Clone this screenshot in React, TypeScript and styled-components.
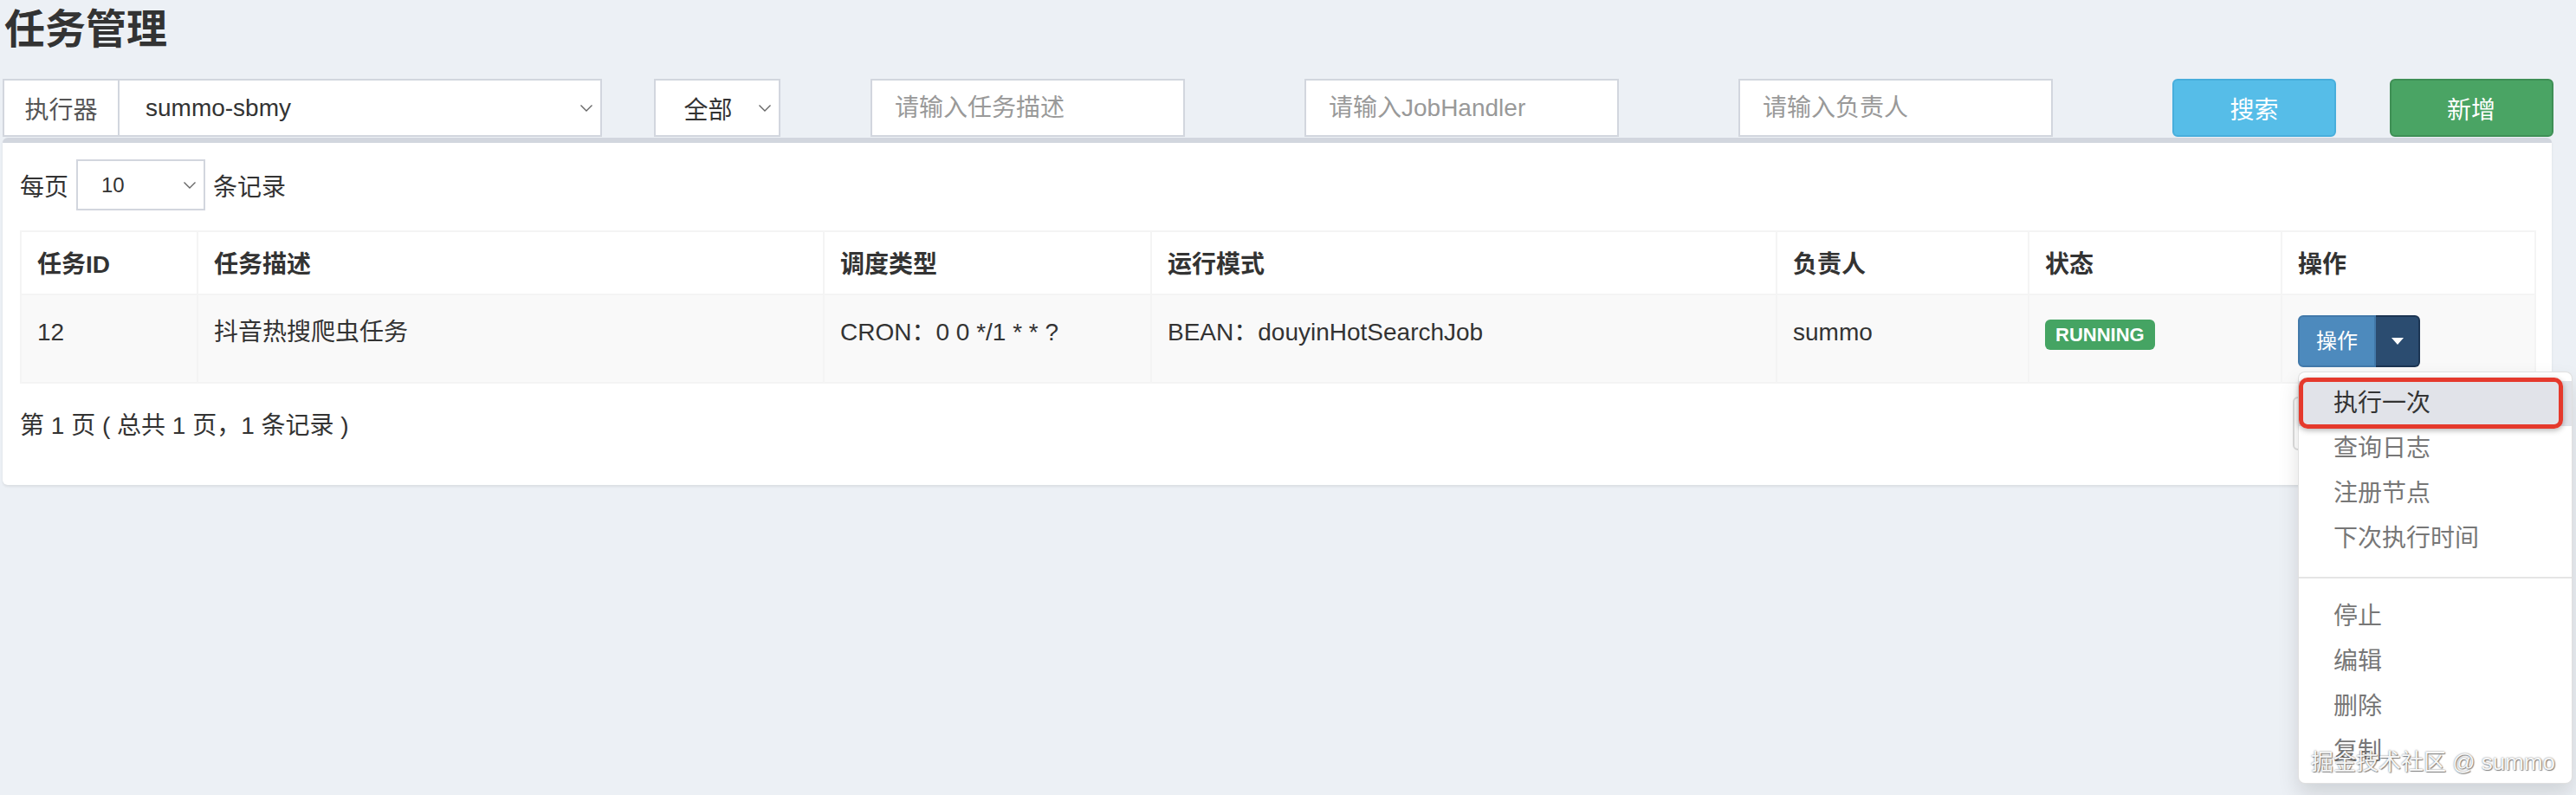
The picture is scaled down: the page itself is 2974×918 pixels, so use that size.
import styled, { createGlobalStyle } from 'styled-components';

const GlobalStyle = createGlobalStyle`
  * {
    box-sizing: border-box;
  }
  html, body {
    margin: 0;
    padding: 0;
  }
  body {
    background: #ecf0f5;
    color: #333;
    font-family: 'Liberation Sans', 'Noto Sans CJK SC', sans-serif;
    font-size: 28px;
  }
`;

const Root = styled.div`
  position: relative;
  width: 2974px;
  height: 918px;
  overflow: hidden;
`;

const Page = styled.div`
  width: 2946px;
  padding-left: 3px;
`;

const Title = styled.h1`
  margin: 0;
  padding-left: 2px;
  font-size: 47px;
  line-height: 68px;
  font-weight: 700;
  color: #333;
`;

const FilterRow = styled.div`
  display: grid;
  grid-template-columns: repeat(12, 190.5px);
  column-gap: 60px;
  margin-top: 23px;
  height: 67px;
`;

const Cell = styled.div<{ $span: number }>`
  grid-column: span ${p => p.$span};
  display: flex;
  height: 100%;
`;

const Addon = styled.div`
  width: 133px;
  display: flex;
  align-items: center;
  justify-content: center;
  background: #fff;
  border: 2px solid #d2d6de;
  border-right: 0;
  color: #555;
`;

const SelectBox = styled.div<{ $width?: number; $pad?: number; $size?: number }>`
  display: flex;
  align-items: center;
  justify-content: space-between;
  width: ${p => (p.$width ? `${p.$width}px` : 'auto')};
  flex: ${p => (p.$width ? 'none' : '1')};
  height: 100%;
  padding: 0 8px 0 ${p => p.$pad ?? 30}px;
  background: #fff;
  border: 2px solid #d2d6de;
  color: #333;
  font-size: ${p => p.$size ?? 28}px;
`;

const TextInput = styled.input`
  width: 363px;
  height: 100%;
  padding: 0 26px;
  border: 2px solid #d2d6de;
  background: #fff;
  font-family: inherit;
  font-size: 28px;
  color: #333;
  outline: none;
  &::placeholder {
    color: #999;
  }
`;

const buttonColors = {
  info: { bg: '#56bde8', border: '#48aedc' },
  success: { bg: '#4aa464', border: '#3e8f55' },
};

const Button = styled.button<{ $variant: 'info' | 'success' }>`
  width: 189px;
  height: 100%;
  border-radius: 6px;
  border: 2px solid ${p => buttonColors[p.$variant].border};
  background: ${p => buttonColors[p.$variant].bg};
  color: #fff;
  font-family: inherit;
  font-size: 28px;
`;

const Box = styled.div`
  margin-top: 1px;
  width: 2943px;
  background: #fff;
  border-top: 6px solid #d2d6de;
  border-radius: 6px;
  box-shadow: 0 2px 3px rgba(0, 0, 0, 0.08);
  padding: 19px 20px 40px;
`;

const LengthRow = styled.div`
  display: flex;
  align-items: center;
  gap: 9px;
  height: 59px;
`;

const Table = styled.table`
  margin-top: 23px;
  width: 100%;
  table-layout: fixed;
  border-collapse: collapse;
  border: 2px solid #f4f4f4;
`;

const Th = styled.th`
  padding: 18px 18px 13px;
  text-align: left;
  font-weight: 700;
  line-height: 40px;
  border: 2px solid #f4f4f4;
  background: #fff;
`;

const Td = styled.td`
  padding: 23px 18px 17px;
  line-height: 40px;
  vertical-align: top;
  border: 2px solid #f4f4f4;
  background: #f9f9f9;
`;

const Badge = styled.span`
  display: inline-block;
  margin-top: 5px;
  height: 35px;
  padding: 0 12px;
  line-height: 35px;
  border-radius: 6px;
  background: #45a463;
  color: #fff;
  font-size: 22px;
  font-weight: 700;
  vertical-align: top;
`;

const OpGroup = styled.div`
  position: relative;
  display: flex;
  width: fit-content;
  height: 60px;
`;

const OpMain = styled.div`
  width: 90px;
  display: flex;
  align-items: center;
  justify-content: center;
  background: #4d8abd;
  border: 2px solid #4279aa;
  border-radius: 6px 0 0 6px;
  color: #fff;
  font-size: 24px;
`;

const OpCaret = styled.div`
  width: 51px;
  display: flex;
  align-items: center;
  justify-content: center;
  background: #2b4c70;
  border: 2px solid #1c3553;
  border-left: 0;
  border-radius: 0 6px 6px 0;
  &::before {
    content: '';
    border-top: 8px solid #fff;
    border-left: 7px solid transparent;
    border-right: 7px solid transparent;
  }
`;

const Menu = styled.ul`
  position: absolute;
  top: calc(100% + 5px);
  left: 0;
  z-index: 10;
  width: 317px;
  margin: 0;
  padding: 10px 0;
  list-style: none;
  background: #fff;
  border: 1px solid rgba(0, 0, 0, 0.12);
  border-radius: 8px;
  box-shadow: 0 12px 24px rgba(0, 0, 0, 0.12);
`;

const MenuItem = styled.li<{ $active?: boolean }>`
  position: relative;
  padding: 6px 40px;
  line-height: 40px;
  font-size: 28px;
  white-space: nowrap;
  color: ${p => (p.$active ? '#333' : '#777')};
  background: ${p => (p.$active ? '#e1e3e9' : 'transparent')};
  ${p =>
    p.$active &&
    `
    &::after {
      content: '';
      position: absolute;
      left: 0;
      right: 10px;
      top: -4px;
      bottom: -3px;
      border: 5px solid #e5392c;
      border-radius: 10px;
      box-shadow: 0 2px 6px rgba(0, 0, 0, 0.3);
    }
  `}
`;

const Divider = styled.li`
  height: 2px;
  margin: 18px 0;
  background: #e5e5e5;
`;

const Footer = styled.div`
  display: flex;
  align-items: center;
  justify-content: space-between;
  margin-top: 15px;
  height: 62px;
`;

const Pager = styled.div`
  display: flex;
  width: 279px;
  height: 62px;
  border: 2px solid #ddd;
  border-radius: 6px;
  overflow: hidden;
`;

const PagerItem = styled.div`
  flex: 1;
  border-left: 2px solid #ddd;
  &:first-child {
    border-left: 0;
  }
`;

const Watermark = styled.div`
  position: absolute;
  right: 24px;
  top: 862px;
  z-index: 20;
  font-size: 26px;
  line-height: 36px;
  color: rgba(255, 255, 255, 0.95);
  text-shadow: 0 0 2px rgba(0, 0, 0, 0.55), 1px 1px 1px rgba(0, 0, 0, 0.4);
  pointer-events: none;
`;

const Chevron = () => (
  <svg width='16' height='10' viewBox='0 0 16 10' fill='none'>
    <polyline points='1.5,1.5 8,8 14.5,1.5' stroke='#666' strokeWidth='1.4' />
  </svg>
);

const columns = [204, 723, 378, 722, 291, 292, 293];
const headers = ['任务ID', '任务描述', '调度类型', '运行模式', '负责人', '状态', '操作'];
const menuTop = ['执行一次', '查询日志', '注册节点', '下次执行时间'];
const menuBottom = ['停止', '编辑', '删除', '复制'];

const App = () => {
  return (
    <Root>
      <GlobalStyle />
      <Page>
        <Title>任务管理</Title>
        <FilterRow>
          <Cell $span={3}>
            <Addon>执行器</Addon>
            <SelectBox>
              summo-sbmy
              <Chevron />
            </SelectBox>
          </Cell>
          <Cell $span={1}>
            <SelectBox $width={146} $pad={33}>
              全部
              <Chevron />
            </SelectBox>
          </Cell>
          <Cell $span={2}>
            <TextInput placeholder='请输入任务描述' />
          </Cell>
          <Cell $span={2}>
            <TextInput placeholder='请输入JobHandler' />
          </Cell>
          <Cell $span={2}>
            <TextInput placeholder='请输入负责人' />
          </Cell>
          <Cell $span={1}>
            <Button $variant='info'>搜索</Button>
          </Cell>
          <Cell $span={1}>
            <Button $variant='success'>新增</Button>
          </Cell>
        </FilterRow>

        <Box>
          <LengthRow>
            每页
            <SelectBox $width={149} $pad={27} $size={24}>
              10
              <Chevron />
            </SelectBox>
            条记录
          </LengthRow>

          <Table>
            <colgroup>
              {columns.map((w, i) => (
                <col key={i} style={{ width: w }} />
              ))}
            </colgroup>
            <thead>
              <tr>
                {headers.map(h => (
                  <Th key={h}>{h}</Th>
                ))}
              </tr>
            </thead>
            <tbody>
              <tr>
                <Td>12</Td>
                <Td>抖音热搜爬虫任务</Td>
                <Td>CRON：0 0 */1 * * ?</Td>
                <Td>BEAN：douyinHotSearchJob</Td>
                <Td>summo</Td>
                <Td>
                  <Badge>RUNNING</Badge>
                </Td>
                <Td>
                  <OpGroup>
                    <OpMain>操作</OpMain>
                    <OpCaret />
                    <Menu>
                      {menuTop.map((m, i) => (
                        <MenuItem key={m} $active={i === 0}>
                          {m}
                        </MenuItem>
                      ))}
                      <Divider />
                      {menuBottom.map(m => (
                        <MenuItem key={m}>{m}</MenuItem>
                      ))}
                    </Menu>
                  </OpGroup>
                </Td>
              </tr>
            </tbody>
          </Table>

          <Footer>
            <span>第 1 页 ( 总共 1 页，1 条记录 )</span>
            <Pager>
              <PagerItem />
              <PagerItem />
            </Pager>
          </Footer>
        </Box>
      </Page>
      <Watermark>掘金技术社区 @ summo</Watermark>
    </Root>
  );
};

export default App;
